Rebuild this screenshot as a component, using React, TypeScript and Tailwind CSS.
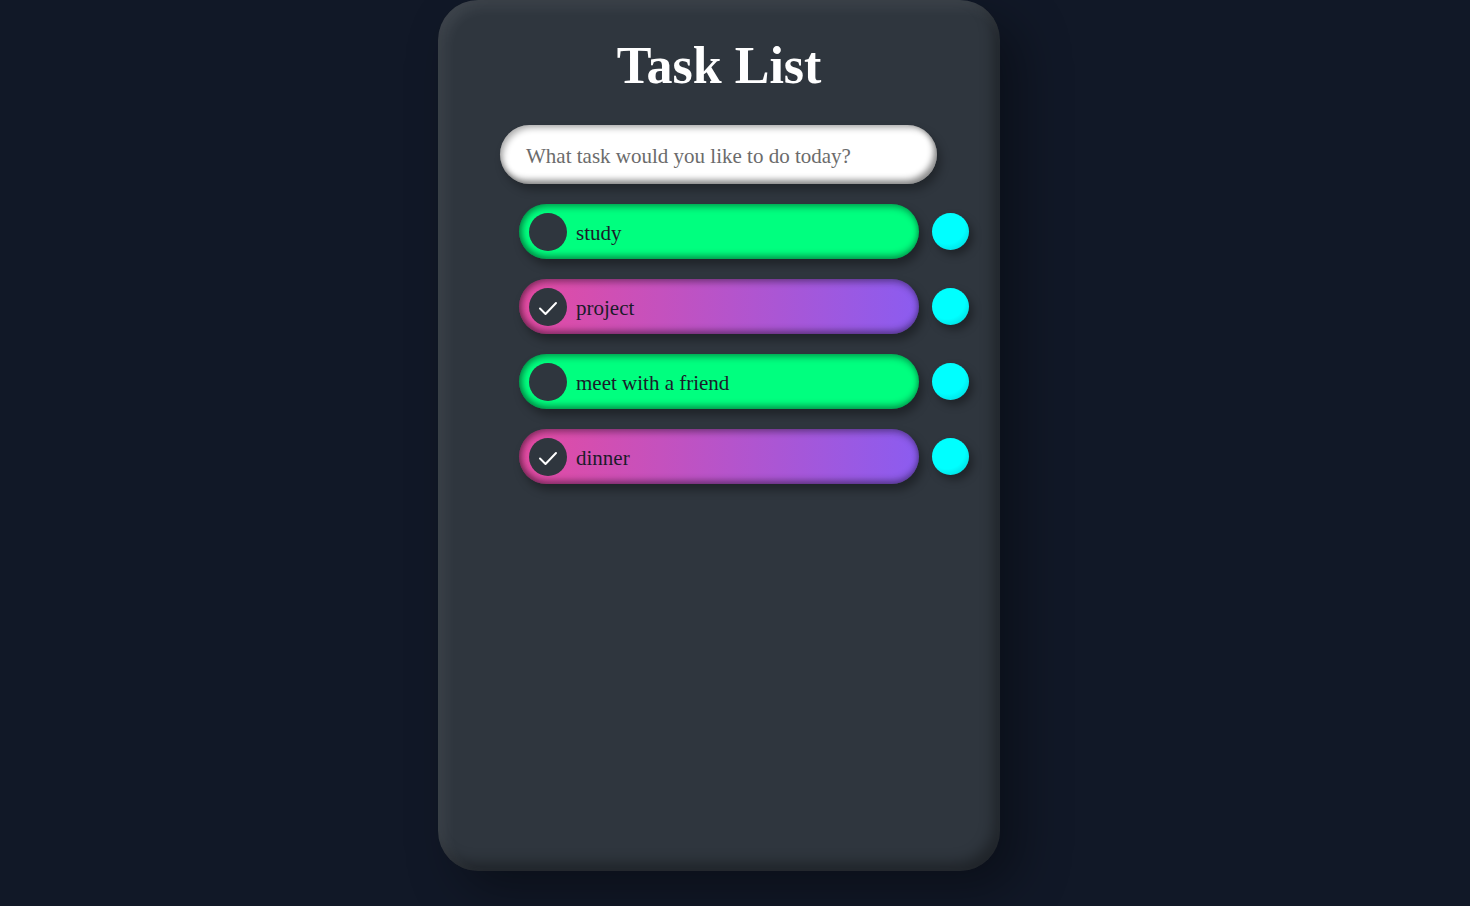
import React from "react";

const tasks = [
  { text: "study", done: false },
  { text: "project", done: true },
  { text: "meet with a friend", done: false },
  { text: "dinner", done: true },
];

export default function App() {
  return (
    <div className="min-h-[906px] w-full bg-[#111827] flex justify-center pr-8" style={{ fontFamily: '"Liberation Serif", serif' }}>
      <div className="w-[562px] h-[871px] rounded-[40px] bg-[#2f363e] shadow-[inset_6px_6px_14px_rgba(255,255,255,0.08),inset_-6px_-8px_14px_rgba(0,0,0,0.35),20px_20px_50px_rgba(0,0,0,0.35)] flex flex-col">
        <h1 className="text-white font-bold text-[52px] leading-none text-center mt-[40px]">Task List</h1>
        <div className="mt-[33px] ml-[62px] w-[437px] h-[59px] rounded-full bg-white shadow-[inset_-3px_-4px_6px_rgba(0,0,0,0.45),inset_3px_3px_6px_rgba(0,0,0,0.3),4px_6px_10px_rgba(0,0,0,0.3)] flex items-center pl-[26px]">
          <span className="text-[21px] text-[#6b6b6b] mt-[5px]">What task would you like to do today?</span>
        </div>
        <div className="mt-[20px] ml-[81px] flex flex-col gap-[20px]">
          {tasks.map((t) => (
            <div key={t.text} className="flex items-center gap-[13px]">
              <div
                className={
                  "w-[400px] h-[55px] rounded-full flex items-center pl-[10px] shadow-[inset_0_4px_6px_rgba(0,0,0,0.25),inset_0_-4px_6px_rgba(0,0,0,0.3),inset_4px_0_6px_rgba(0,0,0,0.2),4px_6px_10px_rgba(0,0,0,0.35)] " +
                  (t.done ? "bg-[linear-gradient(90deg,#e44ba2,#8b5cf0)]" : "bg-[#00ff7f]")
                }
              >
                <div className="w-[38px] h-[38px] rounded-full bg-[#2f363e] flex items-center justify-center shrink-0">
                  {t.done && (
                    <svg width="24" height="24" viewBox="0 0 24 24" fill="none" className="mt-[2px]">
                      <path d="M4 12.5 L9.5 18 L20 7" stroke="white" strokeWidth="2" strokeLinecap="round" strokeLinejoin="round" />
                    </svg>
                  )}
                </div>
                <span className="ml-[9px] text-[21px] text-[#1b1b2a] mt-[4px]">{t.text}</span>
              </div>
              <div className="w-[37px] h-[37px] rounded-full bg-[radial-gradient(circle_at_40%_35%,#00ffff_55%,#00c8d0)] shadow-[4px_5px_8px_rgba(0,0,0,0.35)]" />
            </div>
          ))}
        </div>
      </div>
    </div>
  );
}
